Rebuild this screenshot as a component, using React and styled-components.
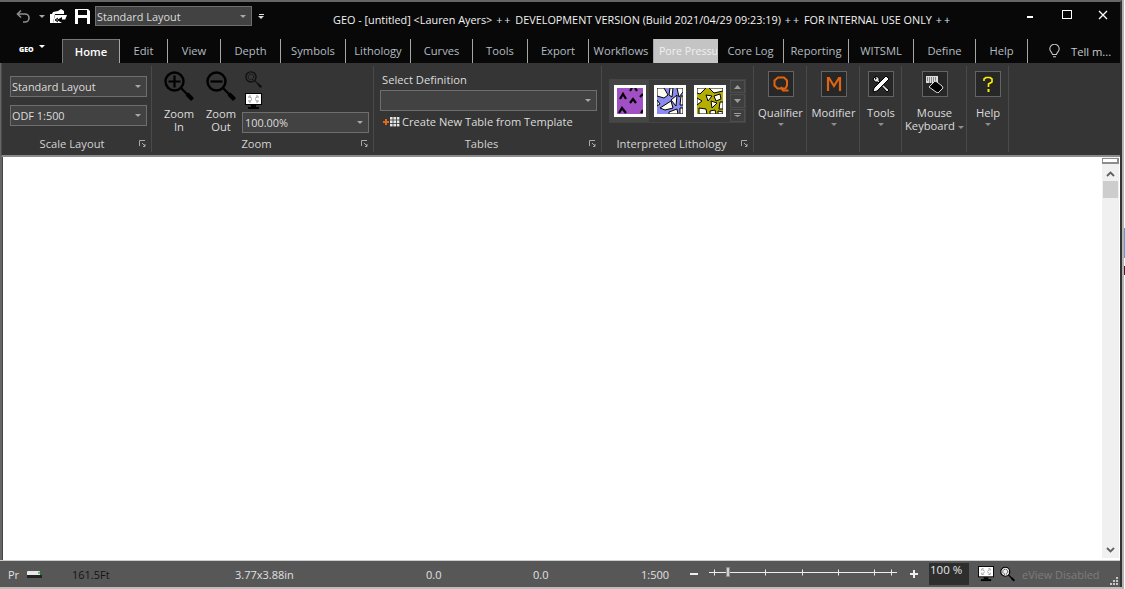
import React from 'react';
import styled, { createGlobalStyle } from 'styled-components';

const Global = createGlobalStyle`
  html, body { margin: 0; padding: 0; background: #fff; overflow: hidden; }
  * { box-sizing: border-box; }
`;

const Page = styled.div`
  width: 1125px; height: 589px; overflow: hidden; display: flex; align-items: flex-start;
  font-family: "Open Sans", "Noto Sans", "Liberation Sans", sans-serif;
  font-size: 11px; color: #d6d6d6;
  background:
    linear-gradient(to bottom, #fff 0 228px, #5a9bd5 228px 258px, #fff 258px 266px, #5c1030 266px 275px, #fff 275px 100%) right top / 1px 100% no-repeat,
    linear-gradient(#b4b4b4, #b4b4b4) 1122px 0 / 2px 100% no-repeat,
    linear-gradient(#bdbdbd, #bdbdbd) left 587px / 100% 2px no-repeat,
    #fff;
`;
const Window = styled.div`
  width: 1122px; height: 587px; flex: none; display: flex; flex-direction: column;
  background: #5a5a5a; border: solid #666; border-width: 2px 0 0 2px;
  border-right: 2px solid #333;
`;
const TitleBar = styled.header`
  height: 36px; flex: none; background: #080808; display: flex; align-items: flex-start; margin-left: -2px;
`;
const Quick = styled.div`
  width: 330px; flex: none; display: flex; align-items: center; height: 28px; padding-left: 16px;
`;
const QuickIcon = styled.span`
  display: flex; flex: none; margin-left: ${p => p.$ml || 0}px;
`;
const Caret = styled.i`
  display: inline-block; flex: none; width: 0; height: 0;
  border-left: 3px solid transparent; border-right: 3px solid transparent;
  border-top: 3px solid ${p => p.$c || '#a8a8a8'};
  margin-left: ${p => p.$ml || 0}px;
`;
const LayoutBox = styled.div`
  width: ${p => p.$w}px; height: ${p => p.$h}px; flex: none;
  display: flex; align-items: center; justify-content: space-between;
  background: #424242; border: 1px solid #6e6e6e; color: #dcdcdc;
  padding: 0 5px 0 ${p => p.$pl ?? 1}px; white-space: nowrap; font-size: 10.9px;
  margin-left: ${p => p.$ml || 0}px; margin-top: ${p => p.$mt || 0}px;
`;
const Customize = styled.span`
  display: flex; flex-direction: column; align-items: center; gap: 1px; margin-left: 6px;
`;
const CustomizeBar = styled.b`
  display: block; width: 5px; height: 1px; background: #dcdcdc;
`;
const Title = styled.div`
  width: 680px; flex: none; padding: 10px 0 0 3px; color: #f2f2f2; font-size: 10.85px; line-height: 16px; white-space: nowrap;
`;
const Plus = styled.span` color: #dbe8f8; letter-spacing: 2px; margin: 0 0 0 1px; `;
const Controls = styled.div`
  flex: 1; display: flex; align-items: flex-start; padding-top: 8px; padding-left: 3px;
`;
const ControlBtn = styled.span`
  display: flex; width: 36px; height: 12px; justify-content: center; flex: none;
`;

const TabRow = styled.nav`
  height: 25px; flex: none; background: #080808; display: flex; align-items: stretch; margin-left: -2px; padding-top: 1px;
`;
const FileTab = styled.div`
  width: 62px; flex: none; display: flex; align-items: flex-start; padding: 6px 0 0 19px; gap: 5px; color: #fff;
  font-size: 7px; font-weight: 800; line-height: 9px;
`;
const Tab = styled.div`
  width: ${p => p.$w}px; flex: none; display: block; font-size: ${p => p.$hl ? 10.6 : 11.2}px;
  white-space: nowrap; overflow: hidden;
  color: ${p => p.$active ? '#fff' : p.$hl ? '#f0f0f0' : '#b3bcc2'};
  font-weight: ${p => p.$active ? 600 : 400};
  background: ${p => p.$active ? '#353535' : p.$hl ? '#c4c4c4' : 'transparent'};
  border-right: 1px solid ${p => p.$hl ? '#c4c4c4' : '#a6a6a6'};
  border-left: ${p => p.$active ? '1px solid #777' : '0'};
  border-top: ${p => p.$active ? '1px solid #777' : '0'};
  padding-left: ${p => p.$hl ? 5 : 0}px;
  text-align: ${p => p.$hl ? 'left' : 'center'};
  line-height: ${p => p.$active ? 23 : 24}px;
`;
const TellMe = styled.div`
  display: flex; align-items: center; height: 24px; padding-left: 21px; gap: 11px; color: #c4ccd0; font-size: 11.2px;
`;

const Ribbon = styled.div`
  height: 94px; flex: none; background: #353535; margin-left: -1px; display: flex; padding: 3px 0 3px 3px;
  border-bottom: 2px solid #8b8b8b; border-left: 1px solid #4a4a4a;
`;
const Group = styled.section`
  width: ${p => p.$w}px; flex: none; display: flex; flex-direction: column; border-right: 1px solid #4a4a4a; height: 86px;
`;
const GroupBody = styled.div`
  flex: 1; display: flex; min-height: 0;
`;
const Stack = styled.div`
  display: flex; flex-direction: column; padding: ${p => p.$p || '0'};
  gap: ${p => p.$gap || 0}px; width: ${p => p.$w ? p.$w + 'px' : 'auto'};
`;
const GroupFoot = styled.footer`
  height: 16px; flex: none; display: flex; align-items: center; color: #d2d2d2; font-size: 11.2px;
  padding: 0 5px 2px 0; 
`;
const FootText = styled.span` flex: 1; text-align: center; `;
const Launcher = styled.span` display: flex; flex: none; `;

const ZoomRow = styled.div` display: flex; `;
const BigZoom = styled.div`
  width: 42px; flex: none; display: flex; flex-direction: column; align-items: center;
`;
const SmallIcons = styled.div`
  display: flex; flex-direction: column; gap: 5px; padding: 5px 0 0 3px;
`;
const Lines = styled.div`
  line-height: 13px; font-size: 11.2px; text-align: center; margin-top: ${p => p.$mt || 0}px; color: #dcdcdc; white-space: nowrap;
`;
const PlainText = styled.div`
  font-size: 11.2px; color: #dcdcdc; white-space: nowrap; line-height: 14px;
  margin: ${p => p.$m || '0'};
`;
const CreateRow = styled.div`
  display: flex; align-items: center; gap: 2px; margin: 4px 0 0 3px; font-size: 11.1px; color: #dcdcdc; line-height: 14px;
`;
const Gallery = styled.div`
  display: flex; margin: 13px 0 0 7px; width: 137px; height: 44px; background: #3a3a3a; border: 1px solid #444;
`;
const Swatches = styled.div`
  display: flex; gap: 8px; padding: 5px 4px; flex: 1;
  background: linear-gradient(#464646, #464646) left top / 39px 100% no-repeat;
`;
const Swatch = styled.div`
  width: 32px; height: 32px; flex: none; border: 3px solid #fff; background: ${p => p.$bg}; display: flex;
`;
const GalleryArrows = styled.div`
  display: flex; flex-direction: column; gap: 1px; width: 15px; flex: none;
`;
const ArrowBtn = styled.div`
  flex: 1; background: #3e3e3e; border: 1px solid #4e4e4e; display: flex; align-items: center; justify-content: center;
`;
const ToolColumn = styled.div`
  width: ${p => p.$w}px; flex: none; height: 86px; border-right: 1px solid #4a4a4a; display: flex; flex-direction: column; align-items: center;
  padding: 5px 0 0 1px;
`;
const ToolBox = styled.div`
  width: 26px; height: 26px; flex: none; background: #272727; border: 1px solid #636363; display: flex; align-items: center; justify-content: center;
`;
const ToolCaret = styled.div` display:flex; justify-content:center; margin-top: 4px; `;
const InlineCaret = styled.i`
  display:inline-block; width:0; height:0; margin-left:${p => p.$ml ?? 3}px; vertical-align: middle;
  border-left: 3px solid transparent; border-right: 3px solid transparent; border-top: 3px solid #8d8d8d;
`;

const Canvas = styled.main`
  flex: 1; min-height: 0; background: #fff; display: flex; justify-content: flex-end; border-left: 1px solid #444; padding-right: 1px;
`;
const ScrollBar = styled.aside`
  width: 17px; background: #f0f0f0; display: flex; flex-direction: column; align-items: center; margin-bottom: 2px;
`;
const Splitter = styled.div`
  width: 17px; height: 6px; margin-top: 1px; background: #fff; border: 1px solid #8d8d8d; border-bottom-width: 2px; border-right-width: 2px; flex:none;
`;
const ScrollArrow = styled.div` display:flex; flex:none; margin-top: ${p => p.$mt || 0}px; margin-bottom: ${p => p.$mb || 0}px; `;
const Thumb = styled.div` width: 15px; height: 17px; background: #cdcdcd; margin-top: 4px; flex: none; `;
const Fill = styled.div` flex: 1; `;

const Status = styled.footer`
  height: 27px; flex: none; background: #575757; display: flex; align-items: center; margin-left: -2px; padding-left: 8px; font-size: 11px; color: #e0e0e0; border-top: 1px solid #cfcfcf;
`;
const Slot = styled.span`
  width: ${p => p.$w}px; flex: none; display: flex; align-items: center; white-space: nowrap;
  color: ${p => p.$c || '#e0e0e0'};
`;
const Sign = styled.span`
  width: ${p => p.$w}px; flex: none; display: flex; align-items: center;
`;
const Slider = styled.div`
  width: 188px; flex: none; height: 11px; margin-right: 13px; margin-top: -3px; display: flex; align-items: center;
`;
const ZoomValue = styled.div`
  width: 40px; height: 22px; flex: none; background: #2e2e2e; color: #e6e6e6; font-size: 11.5px; line-height: 13px; padding-left: 1px; margin-left: 11px; margin-right: 9px;
`;
const Disabled = styled.span`
  color: #7c7c7c; font-size: 11px; white-space: nowrap; width: 88px; flex: none; margin-left: 7px;
`;
const GripSlot = styled.span` display: flex; flex: none; align-self: flex-end; margin-bottom: 2px; `;

/* ---- icons ---- */
const Undo = () => (
  <svg width="15" height="15" viewBox="0 0 15 15" fill="none" stroke="#8e8e8e" strokeWidth="1.6">
    <path d="M5 1.5 1.5 5 5 8.5" /><path d="M2 5h7a4 4 0 0 1 0 8H7" />
  </svg>
);
const OpenFolder = () => (
  <svg width="17" height="15" viewBox="0 0 17 15">
    <path d="M0 5h2l1-2 5-1 3-2 3 2v3H5L3 14H0z" fill="#fff" />
    <path d="M5 6h12l-2 5h-3V8l-5 3 5 3H3z" fill="#fff" />
    <path d="M6 11h9M8 9l-3 2 3 2" stroke="#000" fill="none" />
  </svg>
);
const Save = () => (
  <svg width="15" height="15" viewBox="0 0 15 15">
    <path d="M0 0h13l2 2v13H0z" fill="#fff" />
    <rect x="3" y="1" width="9" height="5" fill="#080808" />
    <rect x="3" y="9" width="9" height="6" fill="#080808" />
  </svg>
);
const Lens = ({ kind, size = 30, color = '#000', fill = 'none' }) => (
  <svg width={size} height={size} viewBox="0 0 30 30" fill="none" stroke={color}>
    <circle cx="10.500" cy="10.500" r="9" strokeWidth="2.400" fill={fill} />
    {kind === 'plus' && <path d="M4.500 10.500h12M10.500 4.500v12" strokeWidth="2.200" />}
    {kind === 'minus' && <path d="M4.500 10.500h12" strokeWidth="2.200" />}
    {kind === 'dots' && <circle cx="10.500" cy="10.500" r="5" strokeWidth="2" strokeDasharray="2 2" />}
    <path d="M17 17l11.500 11.500" strokeWidth="2.200" />
    <path d="M23 23l5.500 5.500" strokeWidth="4" />
  </svg>
);
const Monitor = ({ w = 17, h = 17 }) => (
  <svg width={w} height={h} viewBox="0 0 17 17">
    <rect x=".5" y=".5" width="16" height="11" fill="#fff" stroke="#000" />
    <path d="M4 5V3h2M13 5V3h-2M4 7v2h2M13 7v2h-2M5 4l2 1.500M12 4l-2 1.500M5 8l2-1.500M12 8l-2-1.500" stroke="#999" fill="none" />
    <rect x="6" y="12" width="5" height="2" fill="#000" />
    <rect x="3" y="14" width="11" height="2" fill="#000" />
  </svg>
);
const LauncherIcon = () => (
  <svg width="7" height="7" viewBox="0 0 7 7" fill="none" stroke="#a8a8a8">
    <path d="M.5 6V.5H6" /><path d="M3 3l3 3M6 4v2.500H4" />
  </svg>
);
const TableIcon = () => (
  <svg width="17" height="10" viewBox="0 0 17 10">
    <path d="M0 5h6M3 2v6" stroke="#e0681a" strokeWidth="2" />
    <g fill="#e4e4e4">
      {[0, 1, 2].map(r => [0, 1, 2].map(c => <rect key={`${r}${c}`} x={7 + c * 3.400} y={r * 3.400} width="2.600" height="2.600" />))}
    </g>
  </svg>
);
const Purple = () => (
  <svg width="26" height="26" viewBox="0 0 26 26" stroke="#000" strokeWidth="2.200" fill="none">
    <path d="M3 11l3-5 3 5M13 3l2-3M18 0l2 3M13 15l3-4 3 4M2 25l3-5 4 5M23 9l3-3M24 25l2-3" />
  </svg>
);
const Blue = () => (
  <svg width="26" height="26" viewBox="0 0 26 26">
    <rect width="26" height="26" fill="#8a8af0" />
    <path d="M0 0h7l4 7-4 3-7-2zM13 0h3l-1 9-3-2zM20 0h6v4l-4 5zM14 12l6-5-1 11zM24 8h2v9h-3zM3 20l11-7 2 7-8 2zM0 12l3 4-3 2zM12 24l8-3 1 5h-9zM23 20h3v6h-3z" fill="#fdfdef" stroke="#000" strokeWidth="1" />
  </svg>
);
const Olive = () => (
  <svg width="26" height="26" viewBox="0 0 26 26">
    <rect width="26" height="26" fill="#b4ae00" />
    <path d="M0 0h9L3 6 0 5zM12 0h14v3l-9 2zM9 7l6 1-4 5zM17 8l6-2 1 5-5 2zM0 10l5 3-5 4zM14 13l6 2-5 5zM23 14h3v7h-4zM2 20l7 1 1 5H2zM13 23l5-1 1 4h-6zM21 23l5 1v2h-5z" fill="#fdfdf0" stroke="#000" strokeWidth="1" />
  </svg>
);
const Mini = ({ d }) => <svg width="7" height="4" viewBox="0 0 7 4"><path d={d} fill="#9c9c9c" /></svg>;
const LetterQ = () => (
  <svg width="16" height="16" viewBox="0 0 16 16" fill="none" stroke="#e0640f" strokeWidth="2">
    <path d="M5 1.500h6l3 3v5l-1.500 3h-8l-3-3v-5z" /><path d="M8 11l2 3.500h5.500" />
  </svg>
);
const LetterM = () => (
  <svg width="16" height="16" viewBox="0 0 16 16" fill="none" stroke="#e0640f" strokeWidth="2.200">
    <path d="M2 15V2h1l5 8 5-8h1v13" />
  </svg>
);
const Wrench = () => (
  <svg width="18" height="18" viewBox="0 0 18 18">
    <path d="M1 4l3-3 3 2v3l10 9-2 2-9-10H3z" fill="#e8e8e8" stroke="#000" />
    <path d="M14 1l3 3L5 16l-4 1 1-4z" fill="#fff" stroke="#000" />
    <path d="M3 2l2 1-2 2z" fill="#000" />
  </svg>
);
const KeyMouse = () => (
  <svg width="18" height="18" viewBox="0 0 18 18">
    <rect x="0" y="1" width="12" height="7" fill="#dcdcdc" />
    <path d="M1 3h10M1 5h10M3 7h6" stroke="#333" strokeDasharray="1 1" />
    <path d="M3 12l6-6 2 1 5 4 1 2-5 5-2-1z" fill="#000" stroke="#ddd" />
  </svg>
);
const Question = () => (
  <svg width="10" height="17" viewBox="0 0 10 17" fill="none" stroke="#ffef00" strokeWidth="1.600">
    <path d="M1 5V3l2-1.500h4L9 3v3L5.500 8v3" /><path d="M5.500 13v3" strokeWidth="2" />
  </svg>
);
const Bulb = () => (
  <svg width="11" height="14" viewBox="0 0 11 14" fill="none" stroke="#c8c8c8" strokeWidth="1.100">
    <path d="M3.500 10.500C3 8 .8 7.500.8 5a4.700 4.700 0 0 1 9.400 0c0 2.500-2.200 3-2.700 5.500zM4 12.800h3" />
  </svg>
);
const Battery = () => (
  <svg width="16" height="9" viewBox="0 0 16 9">
    <rect x="0" y="1" width="13" height="7" rx="1" fill="#e8e8e8" />
    <rect x="0" y="5" width="15" height="3" fill="#222" />
    <rect x="11" y="2" width="2" height="2" fill="#3dd53d" />
  </svg>
);
const Chev = ({ up }) => (
  <svg width="9" height="6" viewBox="0 0 9 6" fill="none" stroke="#606060" strokeWidth="1.800">
    <path d={up ? 'M1 5l3.500-3.500L8 5' : 'M1 1l3.500 3.500L8 1'} />
  </svg>
);
const Grip = () => (
  <svg width="8" height="8" viewBox="0 0 8 8" fill="#c8c8c8">
    <rect x="6" y="0" width="2" height="2" /><rect x="3" y="3" width="2" height="2" /><rect x="6" y="3" width="2" height="2" />
    <rect x="0" y="6" width="2" height="2" /><rect x="3" y="6" width="2" height="2" /><rect x="6" y="6" width="2" height="2" />
  </svg>
);
const SliderArt = () => (
  <svg width="188" height="11" viewBox="0 0 188 11">
    <path d="M0 5.500h188" stroke="#eee" />
    {[5, 56, 93, 129, 165, 182].map(x => <path key={x} d={`M${x}.5 2.500v6`} stroke="#eee" />)}
    <rect x="17.500" y=".5" width="3" height="9" fill="#cfcfcf" stroke="#8a8a8a" />
  </svg>
);

const tabs = [
  ['Edit', 48], ['View', 53], ['Depth', 60], ['Symbols', 65], ['Lithology', 65], ['Curves', 62], ['Tools', 55], ['Export', 61], ['Workflows', 65],
];
const tabs2 = [['Core Log', 66], ['Reporting', 65], ['WITSML', 65], ['Define', 62], ['Help', 52]];

const Tool = ({ w, icon, label }) => (
  <ToolColumn $w={w}>
    <ToolBox>{icon}</ToolBox>
    <Lines $mt={9}>{label}</Lines>
    <ToolCaret><InlineCaret $ml={0} /></ToolCaret>
  </ToolColumn>
);

export default function App() {
  return (
    <Page>
      <Global />
      <Window>
        <TitleBar>
          <Quick>
            <QuickIcon><Undo /></QuickIcon>
            <Caret $ml={8} />
            <QuickIcon $ml={5}><OpenFolder /></QuickIcon>
            <QuickIcon $ml={8}><Save /></QuickIcon>
            <LayoutBox $w={157} $h={20} $ml={5}>Standard Layout<Caret /></LayoutBox>
            <Customize><CustomizeBar /><Caret $c="#dcdcdc" /></Customize>
          </Quick>
          <Title>GEO - [untitled] &lt;Lauren Ayers&gt; <Plus>++</Plus> DEVELOPMENT VERSION (Build 2021/04/29 09:23:19) <Plus>++</Plus> FOR INTERNAL USE ONLY <Plus>++</Plus></Title>
          <Controls>
            <ControlBtn><svg width="36" height="12"><rect x="14" y="6" width="6" height="2" fill="#fff" /></svg></ControlBtn>
            <ControlBtn><svg width="11" height="11"><rect x=".5" y=".5" width="9" height="8" fill="none" stroke="#fff" /></svg></ControlBtn>
            <ControlBtn><svg width="10" height="10" viewBox="0 0 10 10"><path d="M1 1l8 8M9 1l-8 8" stroke="#fff" strokeWidth="1.300" /></svg></ControlBtn>
          </Controls>
        </TitleBar>
        <TabRow>
          <FileTab>GEO<Caret $c="#fff" /></FileTab>
          <Tab $w={58} $active>Home</Tab>
          {tabs.map(([t, w]) => <Tab key={t} $w={w}>{t}</Tab>)}
          <Tab $w={64} $hl>Pore Pressu</Tab>
          {tabs2.map(([t, w]) => <Tab key={t} $w={w}>{t}</Tab>)}
          <TellMe><Bulb />Tell m...</TellMe>
        </TabRow>
        <Ribbon>
          <Group $w={147}>
            <GroupBody>
              <Stack $gap={8} $p="10px 0 0 5px">
                <LayoutBox $w={137} $h={21}>Standard Layout<Caret /></LayoutBox>
                <LayoutBox $w={137} $h={21}>ODF 1:500<Caret /></LayoutBox>
              </Stack>
            </GroupBody>
            <GroupFoot><FootText>Scale Layout</FootText><Launcher><LauncherIcon /></Launcher></GroupFoot>
          </Group>
          <Group $w={222}>
            <GroupBody>
              <Stack $p="5px 0 0 6px" $w={90}>
                <ZoomRow>
                  <BigZoom><Lens kind="plus" /><Lines $mt={6}>Zoom<br />In</Lines></BigZoom>
                  <BigZoom><Lens kind="minus" /><Lines $mt={6}>Zoom<br />Out</Lines></BigZoom>
                </ZoomRow>
              </Stack>
              <Stack>
                <SmallIcons><Lens kind="dots" size={17} color="#111" /><Monitor /></SmallIcons>
                <LayoutBox $w={127} $h={21} $pl={2} $mt={2}>100.00%<Caret /></LayoutBox>
              </Stack>
            </GroupBody>
            <GroupFoot><FootText>Zoom</FootText><Launcher><LauncherIcon /></Launcher></GroupFoot>
          </Group>
          <Group $w={228}>
            <GroupBody>
              <Stack $p="7px 0 0 6px">
                <PlainText $m="0 0 3px 2px">Select Definition</PlainText>
                <LayoutBox $w={217} $h={21}><span /><Caret /></LayoutBox>
                <CreateRow><TableIcon />Create New Table from Template</CreateRow>
              </Stack>
            </GroupBody>
            <GroupFoot><FootText>Tables</FootText><Launcher><LauncherIcon /></Launcher></GroupFoot>
          </Group>
          <Group $w={152}>
            <GroupBody>
              <Gallery>
                <Swatches>
                  <Swatch $bg="#a050c4"><Purple /></Swatch>
                  <Swatch $bg="#fff"><Blue /></Swatch>
                  <Swatch $bg="#fff"><Olive /></Swatch>
                </Swatches>
                <GalleryArrows>
                  <ArrowBtn><Mini d="M3.500 0 7 4H0z" /></ArrowBtn>
                  <ArrowBtn><Mini d="M0 0h7L3.500 4z" /></ArrowBtn>
                  <ArrowBtn><Mini d="M0 0h7v1H0zM0 2h7L3.500 4z" /></ArrowBtn>
                </GalleryArrows>
              </Gallery>
            </GroupBody>
            <GroupFoot><FootText>Interpreted Lithology</FootText><Launcher><LauncherIcon /></Launcher></GroupFoot>
          </Group>
          <Tool w={53} icon={<LetterQ />} label="Qualifier" />
          <Tool w={53} icon={<LetterM />} label="Modifier" />
          <Tool w={42} icon={<Wrench />} label="Tools" />
          <ToolColumn $w={65}>
            <ToolBox><KeyMouse /></ToolBox>
            <Lines $mt={9}>Mouse<br />Keyboard<InlineCaret /></Lines>
          </ToolColumn>
          <Tool w={42} icon={<Question />} label="Help" />
        </Ribbon>
        <Canvas>
          <ScrollBar>
            <Splitter />
            <ScrollArrow $mt={7}><Chev up /></ScrollArrow>
            <Thumb />
            <Fill />
            <ScrollArrow $mb={5}><Chev /></ScrollArrow>
          </ScrollBar>
        </Canvas>
        <Status>
          <Slot $w={19}>Pr</Slot>
          <Slot $w={45}><Battery /></Slot>
          <Slot $w={163} $c="#141414">161.5Ft</Slot>
          <Slot $w={191}>3.77x3.88in</Slot>
          <Slot $w={107}>0.0</Slot>
          <Slot $w={108}>0.0</Slot>
          <Slot $w={49}>1:500</Slot>
          <Sign $w={19}><svg width="8" height="2"><rect width="8" height="2" fill="#eee" /></svg></Sign>
          <Slider><SliderArt /></Slider>
          <Sign $w={8}><svg width="8" height="8"><path d="M0 4h8M4 0v8" stroke="#eee" strokeWidth="2" /></svg></Sign>
          <ZoomValue>100 %</ZoomValue>
          <Sign $w={22}><Monitor w={16} h={16} /></Sign>
          <Sign $w={15}><Lens kind="dots" size={16} color="#000" fill="#eee" /></Sign>
          <Disabled>eView Disabled</Disabled>
          <GripSlot><Grip /></GripSlot>
        </Status>
      </Window>
    </Page>
  );
}
